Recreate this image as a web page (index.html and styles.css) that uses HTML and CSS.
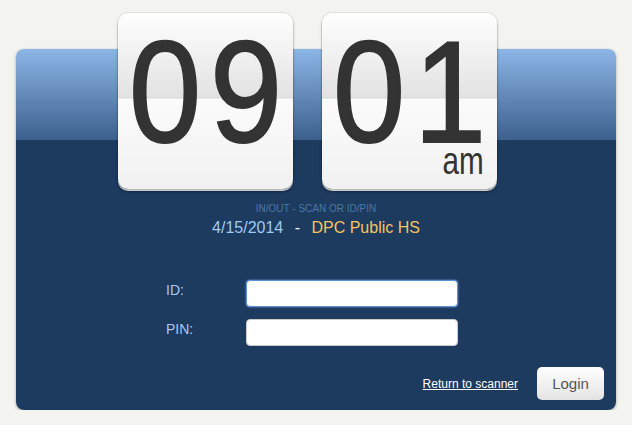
FILE: index.html
```html
<!DOCTYPE html>
<html lang="en">
<head>
    <meta charset="UTF-8">
    <meta name="viewport" content="width=device-width, initial-scale=1.0">
    <title>Time Clock</title>
    <link rel="stylesheet" href="styles.css">
</head>
<body>
    <div class="panel">
        <div class="clock">
            <div class="card">
                <span class="digits">09</span>
            </div>
            <div class="card">
                <span class="digits">01</span>
                <span class="ampm">am</span>
            </div>
        </div>

        <div class="mode">IN/OUT - SCAN OR ID/PIN</div>
        <div class="info">
            <span class="date">4/15/2014</span>
            <span class="dash">-</span>
            <span class="school">DPC Public HS</span>
        </div>

        <form class="login-form">
            <div class="row">
                <label for="id">ID:</label>
                <input type="text" id="id" class="focused" autofocus>
            </div>
            <div class="row">
                <label for="pin">PIN:</label>
                <input type="password" id="pin">
            </div>
            <div class="actions">
                <a href="#">Return to scanner</a>
                <button type="button">Login</button>
            </div>
        </form>
    </div>
</body>
</html>
```

FILE: styles.css
```css
body {
    font-family: "Liberation Sans", Arial, sans-serif;
    margin: 0;
    padding: 49px 16px 0;
    background-color: #f3f3ef;
}
.panel {
    display: flow-root;
    width: 600px;
    height: 361px;
    border-radius: 8px;
    background: linear-gradient(#8cb6e6, #3d608e 91px, #1d3a5f 91px);
    box-shadow: 0 1px 3px rgba(0, 0, 0, 0.35);
}
.clock {
    display: flex;
    justify-content: center;
    gap: 29px;
    margin-top: -36px;
    padding-right: 17px;
}
.card {
    position: relative;
    width: 175px;
    height: 176px;
    border-radius: 10px;
    background: linear-gradient(#ffffff, #e2e2e2 84px, #d8d8d8 85px, #fbfbfb 86px, #f1f1f1);
    box-shadow: 0 0 0 1px rgba(0, 0, 0, 0.08), 0 2px 0 #c9c9c9, 0 3px 3px rgba(0, 0, 0, 0.3);
    display: flex;
    justify-content: center;
    overflow: hidden;
}
.digits {
    display: inline-block;
    font-size: 144px;
    line-height: 0.8;
    height: 115px;
    color: #333;
    letter-spacing: 10px;
    margin-top: 22px;
    margin-left: 10px;
    -webkit-text-stroke: 2px #333;
    transform: scaleX(0.9);
}
.ampm {
    position: absolute;
    right: 13px;
    bottom: 16px;
    font-size: 38px;
    line-height: 0.6;
    color: #333;
    transform: scaleX(0.78);
    transform-origin: right bottom;
}
.mode {
    margin-top: 14px;
    text-align: center;
    font-size: 10px;
    color: #4c77a8;
}
.info {
    margin-top: 5px;
    text-align: center;
    font-size: 16px;
}
.date {
    color: #9dcbf4;
}
.dash {
    color: #ffffff;
    margin: 0 7px;
}
.school {
    color: #f6c35e;
}
.login-form {
    margin-top: 43px;
    padding-left: 150px;
}
.row {
    display: flex;
    align-items: center;
    margin-bottom: 12px;
}
.row label {
    width: 80px;
    font-size: 14px;
    color: #a9c9f0;
    margin-top: -8px;
}
.row input {
    width: 212px;
    height: 27px;
    box-sizing: border-box;
    border: 1px solid #c9c9c9;
    border-radius: 4px;
    background-color: #fff;
    padding: 0 6px;
    outline: none;
}
.row input.focused {
    border-color: #5b8fd6;
    box-shadow: 0 0 2px #7aa7e8;
}
.actions {
    display: flex;
    justify-content: flex-end;
    align-items: center;
    gap: 19px;
    margin-top: 21px;
    padding-right: 12px;
}
.actions a {
    font-size: 12px;
    color: #ffffff;
}
.actions button {
    width: 67px;
    height: 33px;
    border: none;
    border-radius: 5px;
    background: linear-gradient(#ffffff, #e4e4e4);
    font-family: "Liberation Sans", Arial, sans-serif;
    font-size: 15px;
    color: #555;
}
```
